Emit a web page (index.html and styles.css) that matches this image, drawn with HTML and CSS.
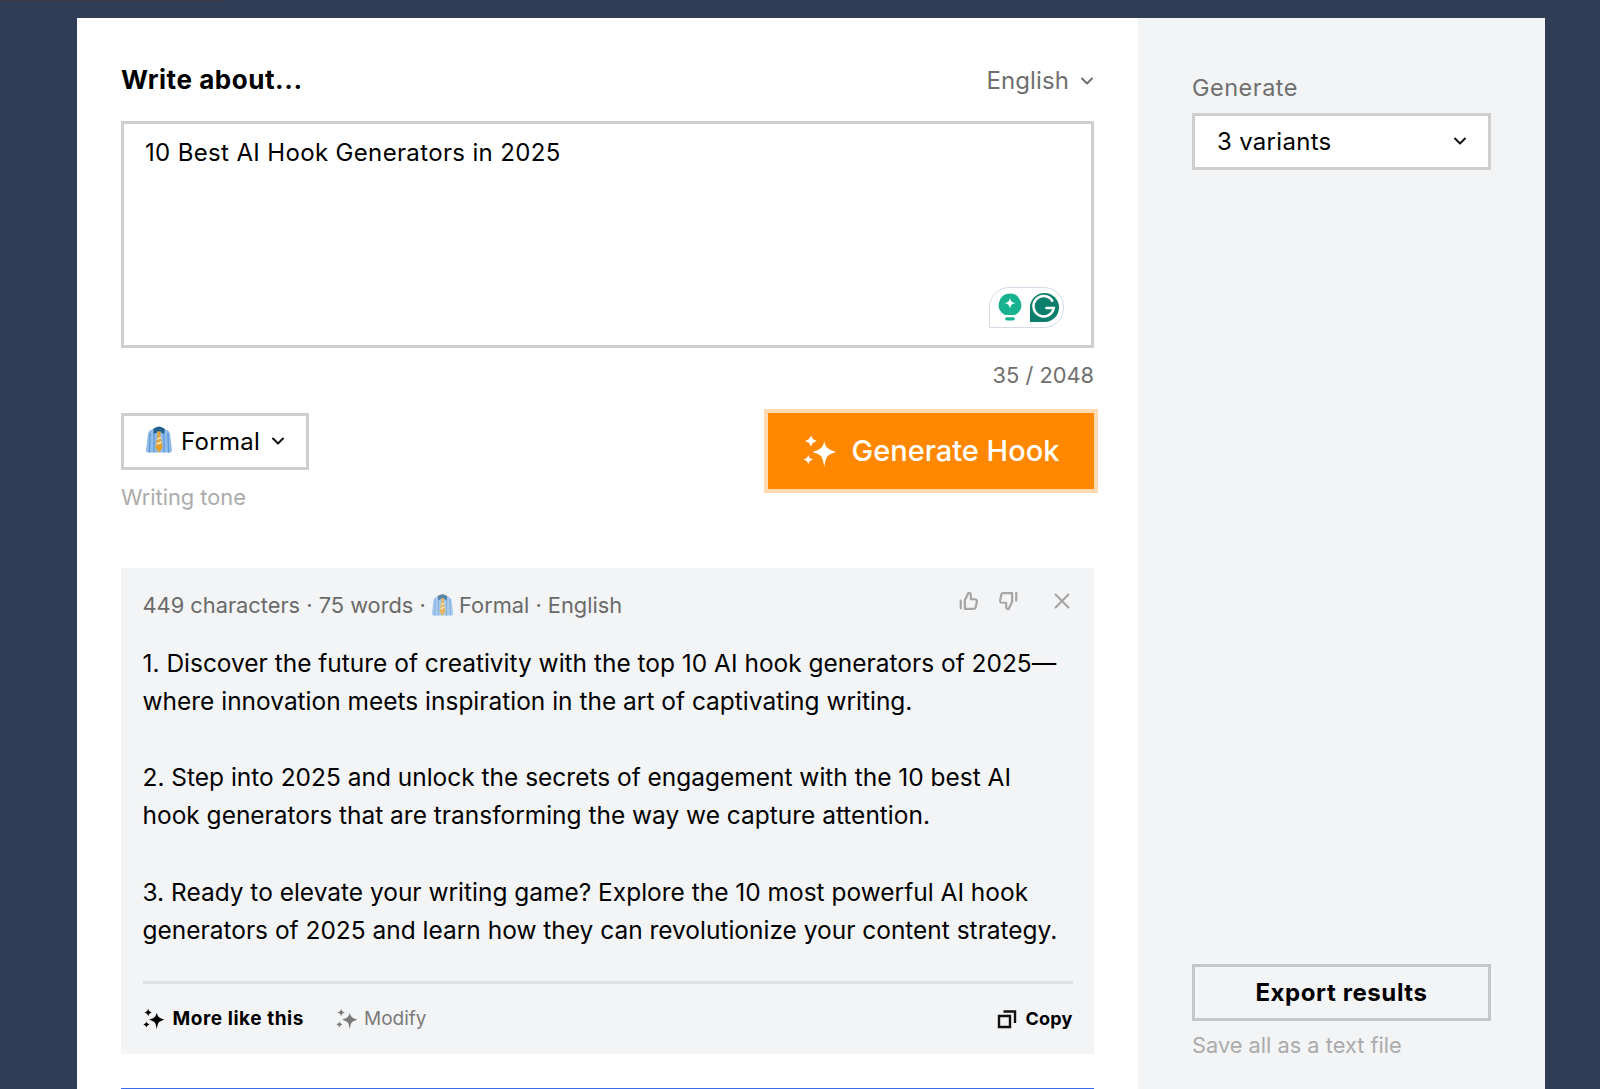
FILE: index.html
```html
<!DOCTYPE html>
<html lang="en">
<head>
<meta charset="utf-8">
<title>Hook Generator</title>
<link rel="stylesheet" href="styles.css">
</head>
<body>
<svg class="defs" width="0" height="0" aria-hidden="true">
  <defs>
    <symbol id="sparkles" viewBox="0 0 32 32">
      <path d="M20 7 C20.800 10 21.800 12.200 23.500 13.500 C25 14.800 27.500 15.800 31 17 C27.500 18.200 25 19.200 23.500 20.500 C21.800 22 20.800 26 20 31 C19.200 26 18.200 22 16.500 20.500 C15 19.200 12.500 18.200 9 17 C12.500 15.800 15 14.800 16.500 13.500 C18.200 12.200 19.200 10 20 7Z"/>
      <path d="M7.500 1 C8 2.500 8.400 3.700 9.400 4.600 C10.300 5.400 11.500 5.900 13 6.500 C11.500 7.100 10.300 7.600 9.400 8.400 C8.400 9.300 8 10.500 7.500 12 C7 10.500 6.600 9.300 5.600 8.400 C4.700 7.600 3.500 7.100 2 6.500 C3.500 5.900 4.700 5.400 5.600 4.600 C6.600 3.700 7 2.500 7.500 1Z"/>
      <path d="M5 19.500 C5.400 20.800 5.700 21.600 6.400 22.300 C7.100 23 8 23.300 9.500 24 C8 24.700 7.100 25 6.400 25.700 C5.700 26.400 5.400 27.200 5 28.500 C4.600 27.200 4.300 26.400 3.600 25.700 C2.900 25 2 24.700 .5 24 C2 23.300 2.900 23 3.600 22.300 C4.300 21.600 4.600 20.800 5 19.500Z"/>
    </symbol>
    <symbol id="shirt" viewBox="0 0 28 28">
      <path fill="#8fbce8" d="M3 9 Q3 6 7 4.500 L21 4.500 Q25 6 25 9 L27 25 Q27 27.500 25 27.500 L3 27.500 Q1 27.500 1 25Z"/>
      <path fill="#5f97d6" d="M4.500 8h1.300l-.8 19.500H3.700zM8.500 7h1.200l-.2 20.500H8.300zM18.300 7h1.200l.2 20.500h-1.200zM22.200 8h1.300l.8 19.500h-1.300z"/>
      <path fill="#24618f" d="M8 4 Q14 -1 20 4 L19 9 L14 6.500 L9 9Z"/>
      <path fill="#e2a02c" d="M12 6.500h4l-.7 3 2.400 13-3.700 5-3.700-5 2.400-13z"/>
      <path fill="#f6e2b0" d="M12.600 13l3-1.500.4 2-3.800 1.700zM11.800 18l4.400-2 .4 2-5.200 2.300z"/>
    </symbol>
    <symbol id="chev" viewBox="0 0 14 14">
      <path d="M2 4.500 7 9.500 12 4.500" fill="none" stroke="currentColor" stroke-width="2" stroke-linecap="round" stroke-linejoin="round"/>
    </symbol>
  </defs>
</svg>
<div class="topline"></div>
<main class="card">
  <section class="main">
    <div class="head">
      <h1 class="title">Write about...</h1>
      <div class="lang">English <svg class="chev"><use href="#chev"/></svg></div>
    </div>
    <div class="textarea">
      10 Best AI Hook Generators in 2025
      <div class="gram">
        <svg class="bulb" viewBox="0 0 22 26">
          <path fill="#17b391" d="M11 0.500a10.500 10.500 0 0 0-6.500 18.700 L6.500 20.500h9l2-1.300A10.500 10.500 0 0 0 11 0.500z"/>
          <path fill="#fff" d="M11 4.500c.6 3.300 1.700 4.400 5 5-3.300.6-4.400 1.700-5 5-.6-3.300-1.700-4.400-5-5 3.300-.6 4.400-1.700 5-5z"/>
          <rect fill="#17b391" x="6.500" y="22.500" width="9" height="3" rx="1.500"/>
        </svg>
        <svg class="glogo" viewBox="0 0 32 32">
          <path fill="#0b7f6b" d="M16 1a15 15 0 0 1 0 30H1V16A15 15 0 0 1 16 1z"/>
          <path fill="none" stroke="#fff" stroke-width="2.600" stroke-linecap="round" d="M24 9a10.500 10.500 0 1 0 1.500 7.500H18"/>
        </svg>
      </div>
    </div>
    <div class="count">35 / 2048</div>
    <div class="controls">
      <div class="tone-wrap">
        <div class="tone">
          <svg class="emoji"><use href="#shirt"/></svg>
          <span>Formal</span>
          <svg class="chev dark"><use href="#chev"/></svg>
        </div>
        <div class="hint">Writing tone</div>
      </div>
      <button class="generate">
        <svg class="spark-lg"><use href="#sparkles"/></svg>
        Generate Hook
      </button>
    </div>
    <article class="result">
      <div class="meta-row">
        <div class="meta">449 characters · 75 words · <svg class="emoji-sm"><use href="#shirt"/></svg> Formal · English</div>
        <div class="feedback">
          <svg class="ficon" viewBox="0 0 24 24"><path d="M3 11.500v8.500M7.500 20.500h9.800a2 2 0 0 0 2-1.600l1.300-6.400a2 2 0 0 0-2-2.400h-4.600V5.500A2.500 2.500 0 0 0 11.500 3L7.500 11z"/></svg>
          <svg class="ficon down" viewBox="0 0 24 24"><path d="M21 3v8.500M16.500 3.500H6.700a2 2 0 0 0-2 1.600L3.400 11.500a2 2 0 0 0 2 2.400H10v4.600a2.500 2.500 0 0 0 2.500 2.500L16.500 13z"/></svg>
          <svg class="ficon close" viewBox="0 0 24 24"><path d="M5 5l14 14M19 5 5 19"/></svg>
        </div>
      </div>
      <div class="body-text">
        <p>1. Discover the future of creativity with the top 10 AI hook generators of 2025—where innovation meets inspiration in the art of captivating writing.</p>
        <p>2. Step into 2025 and unlock the secrets of engagement with the 10 best AI hook generators that are transforming the way we capture attention.</p>
        <p>3. Ready to elevate your writing game? Explore the 10 most powerful AI hook generators of 2025 and learn how they can revolutionize your content strategy.</p>
      </div>
      <div class="actions">
        <div class="action strong"><svg class="spark-sm"><use href="#sparkles"/></svg>More like this</div>
        <div class="action muted"><svg class="spark-sm spark-tight"><use href="#sparkles"/></svg>Modify</div>
        <div class="action strong copy">
          <svg class="copy-icon" viewBox="0 0 20 20"><path d="M2 7h11v11H2z"/><path d="M6.500 2.500H18V14"/></svg>
          Copy
        </div>
      </div>
    </article>
    <div class="next"></div>
  </section>
  <aside class="side">
    <div>
      <div class="side-label">Generate</div>
      <div class="select">3 variants <svg class="chev dark"><use href="#chev"/></svg></div>
    </div>
    <div>
      <button class="export">Export results</button>
      <div class="hint side-hint">Save all as a text file</div>
    </div>
  </aside>
</main>
</body>
</html>
```

FILE: styles.css
```css
* { box-sizing: border-box; }
html, body { margin: 0; height: 1089px; overflow: hidden; }
body { background: #2f3d57; font-family: Inter, "Liberation Sans", sans-serif; color: #000; position: relative; }
.defs { position: absolute; }
.topline { position: absolute; left: 0; top: 0; width: 225px; height: 1px; background: #3a3a45; }
.card { display: grid; grid-template-columns: 1061px 407px; width: 1468px; height: 1072px; margin: 17.5px 0 0 77px; }
.main { background: #fff; padding: 44px 44px 0; overflow: hidden; }
.side { background: #f3f4f6; padding: 59px 54px 31px; display: flex; flex-direction: column; justify-content: space-between; }
.head { display: flex; justify-content: space-between; align-items: center; height: 36px; margin-bottom: 23px; }
.title { margin: 0; font-size: 26px; font-weight: 700; letter-spacing: .55px; }
.lang { font-size: 24px; letter-spacing: .1px; color: #6f6f6f; display: flex; align-items: center; gap: 11px; position: relative; top: 1px; }
.chev { width: 14px; height: 14px; display: block; flex: none; }
.chev.dark { color: #111; }
.textarea { position: relative; border: 3px solid #cfcfcf; height: 227px; padding: 13px 21px; font-size: 24px; letter-spacing: .35px; line-height: 32px; }
.gram { position: absolute; right: 27px; bottom: 17px; width: 75px; height: 41px; border: 1px solid #d6dbe6; border-radius: 20px 20px 20px 0; display: flex; align-items: center; gap: 7px; padding-left: 8px; background: #fff; }
.bulb { width: 24px; height: 28px; }
.glogo { width: 31px; height: 31px; }
.count { text-align: right; color: #6f6f6f; font-size: 21.800px; margin-top: 14px; line-height: 27px; }
.controls { display: flex; justify-content: space-between; align-items: flex-start; margin-top: 24px; }
.tone { display: inline-flex; align-items: center; height: 57px; width: 188px; border: 3px solid #cfcfcf; padding: 0 0 0 21px; font-size: 24px; letter-spacing: .3px; }
.tone span { margin-left: 8px; margin-right: 11px; }
.emoji { width: 28px; height: 28px; margin-top: -4px; flex: none; }
.emoji-sm { width: 23px; height: 23px; vertical-align: -3px; opacity: .75; margin: 0 -1px; }
.hint { color: #ababab; font-size: 21.800px; margin-top: 14px; line-height: 27px; }
.generate { width: 334px; height: 84px; margin: -4px -4px 0 0; background: #ff8800; border: 4px solid #ffdab3; color: #fff; font: 500 29px Inter, sans-serif; display: flex; align-items: center; justify-content: center; gap: 15px; padding: 0; }
.spark-lg { width: 34px; height: 34px; fill: #fff; }
.spark-sm { width: 22px; height: 22px; fill: currentColor; margin-right: 8px; flex: none; }
.spark-tight { margin-right: 6px; }
.result { background: #f3f4f6; margin-top: 57px; height: 486px; padding: 22px 21.500px 0; }
.meta-row { display: flex; justify-content: space-between; align-items: flex-start; }
.meta { font-size: 21.800px; color: #6a6a6a; line-height: 30px; }
.feedback { display: flex; align-items: center; gap: 17px; }
.ficon { width: 22px; height: 22px; fill: none; stroke: #a6a6a6; stroke-width: 2.400; stroke-linejoin: round; stroke-linecap: round; }
.ficon.close { margin-left: 15px; }
.body-text { margin-top: 24px; font-size: 24.470px; line-height: 38.200px; }
.body-text p { margin: 0 0 38.200px; }
.actions { display: flex; align-items: center; border-top: 3px solid #e0e1e3; margin-top: -6px; height: 72px; font-size: 19px; gap: 32px; }
.action { display: flex; align-items: center; }
.strong { font-weight: 700; letter-spacing: .55px; }
.muted { color: #7a7a7a; }
.copy { margin-left: auto; font-size: 18px; letter-spacing: .2px; }
.copy-icon { width: 20px; height: 20px; fill: none; stroke: #111; stroke-width: 2.400; margin-right: 8px; }
.next { margin-top: 34px; height: 3px; background: #3b6bea; }
.side-label { color: #6f6f6f; font-size: 23.500px; letter-spacing: .5px; line-height: 30px; margin-top: -4px; margin-bottom: 10px; }
.select { height: 57px; background: #fff; border: 3px solid #cfcfcf; display: flex; align-items: center; justify-content: space-between; padding: 0 21px 0 22px; font-size: 24px; letter-spacing: .3px; }
.export { display: block; width: 100%; height: 57px; background: transparent; border: 3px solid #c4c6c9; font: 700 24px Inter, sans-serif; letter-spacing: .6px; color: #000; padding: 0; }
.side-hint { margin-top: 11px; }
```
